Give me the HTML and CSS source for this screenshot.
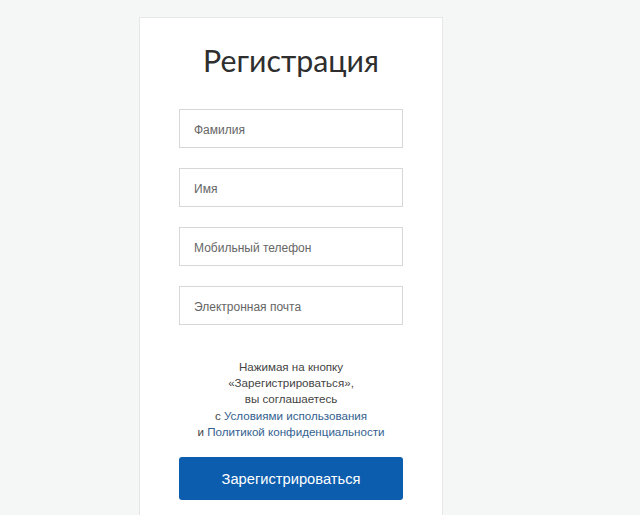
FILE: index.html
```html
<!DOCTYPE html>
<html lang="ru">
<head>
<meta charset="utf-8">
<title>Регистрация</title>
<link rel="stylesheet" href="styles.css">
</head>
<body>
<div class="card">
  <h1 class="title">Регистрация</h1>
  <form class="form">
    <input class="field" type="text" placeholder="Фамилия">
    <input class="field" type="text" placeholder="Имя">
    <input class="field" type="text" placeholder="Мобильный телефон">
    <input class="field" type="text" placeholder="Электронная почта">
    <p class="note">Нажимая на кнопку<br>«Зарегистрироваться»,<br>вы соглашаетесь<br>с <a href="#">Условиями использования</a><br>и <a href="#">Политикой конфиденциальности</a></p>
    <button class="btn" type="button">Зарегистрироваться</button>
  </form>
</div>
</body>
</html>
```

FILE: styles.css
```css
html, body {
  margin: 0;
  padding: 0;
  background: #f5f6f6;
  height: 100%;
  overflow: hidden;
}
body {
  padding-top: 17px;
  font-family: "Liberation Sans", Arial, sans-serif;
  color: #333;
}
.card {
  margin-left: 139px;
  width: 224px;
  padding: 24px 39px 40px;
  background: #fff;
  border: 1px solid #e6e8e8;
  min-height: 600px;
}
.title {
  margin: 0 0 31px;
  font-family: Lato, "Open Sans", sans-serif;
  font-weight: 400;
  font-size: 30.3px;
  line-height: 36px;
  text-align: center;
  color: #2e2e2e;
}
.form {
  display: flex;
  flex-direction: column;
  margin: 0;
}
.field {
  box-sizing: border-box;
  height: 39px;
  width: 224px;
  margin: 0 0 20px;
  padding: 2px 14px 0;
  border: 1px solid #d5d7d8;
  border-radius: 0;
  font-family: "Liberation Sans", Arial, sans-serif;
  font-size: 12px;
  color: #333;
  background: #fff;
  outline: none;
}
.field::placeholder {
  color: #666;
}
.field:last-of-type {
  margin-bottom: 34px;
}
.note {
  margin: 0 0 17px;
  font-size: 11.6px;
  line-height: 16.2px;
  text-align: center;
  color: #444;
}
.note a {
  color: #33618f;
  text-decoration: none;
}
.btn {
  height: 43px;
  width: 224px;
  border: none;
  border-radius: 3px;
  background: #0c5dae;
  color: #fff;
  font-family: "Liberation Sans", Arial, sans-serif;
  font-size: 14.7px;
  padding-bottom: 1px;
  cursor: pointer;
}
```
